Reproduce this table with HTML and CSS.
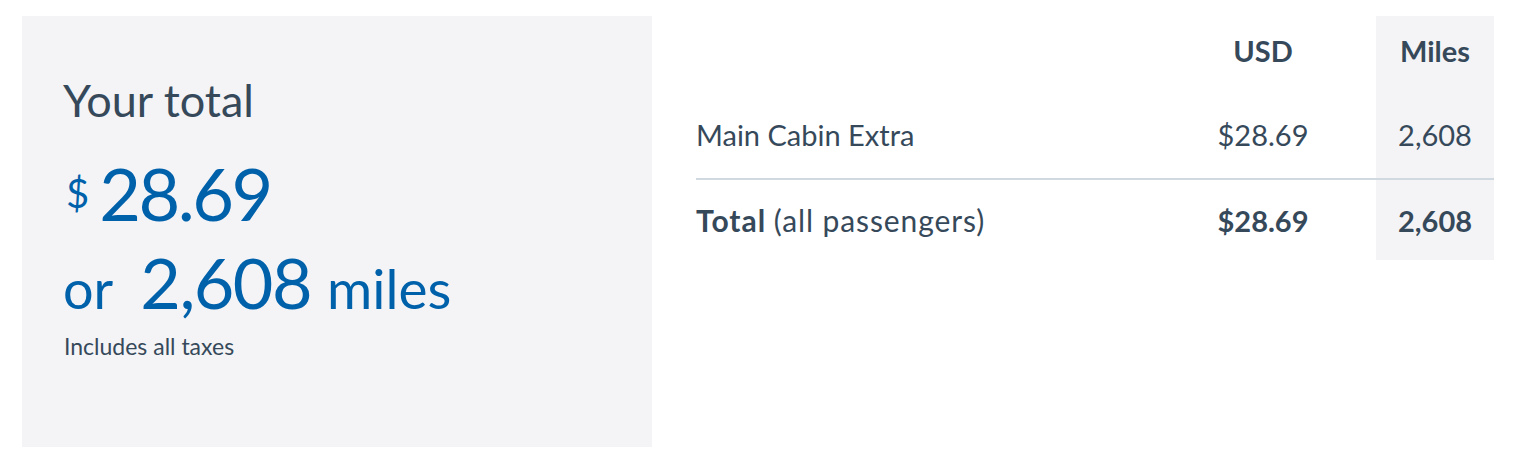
FILE: index.html
```html
<!DOCTYPE html>
<html lang="en">
<head>
<meta charset="utf-8">
<title>Your total</title>
<link rel="stylesheet" href="styles.css">
</head>
<body>
<div class="page">
  <section class="summary">
    <h2 class="summary-title">Your total</h2>
    <div class="price"><span class="currency">$</span><span class="amount">28.69</span></div>
    <div class="miles-line"><span class="or">or</span><span class="miles-amount">2,608</span><span class="miles-unit">miles</span></div>
    <p class="note">Includes all taxes</p>
  </section>
  <section class="breakdown">
    <div class="cell head"></div>
    <div class="cell head num">USD</div>
    <div class="cell head num miles-col">Miles</div>

    <div class="cell item divider">Main Cabin Extra</div>
    <div class="cell item num divider">$28.69</div>
    <div class="cell item num miles-col divider">2,608</div>

    <div class="cell total"><span class="total-label"><strong>Total</strong> <span class="total-sub">(all passengers)</span></span></div>
    <div class="cell total num"><strong>$28.69</strong></div>
    <div class="cell total num miles-col"><strong>2,608</strong></div>
  </section>
</div>
</body>
</html>
```
FILE: styles.css
```css
* { box-sizing: border-box; }
html, body { margin: 0; padding: 0; background: #ffffff; }
body {
  font-family: Lato, "Open Sans", "Liberation Sans", sans-serif;
  color: #36495a;
}
.page {
  display: flex;
  align-items: flex-start;
  gap: 44px;
  padding: 16px 24px 0 22px;
}
.summary {
  width: 630px;
  height: 431px;
  flex: none;
  background: #f4f4f6;
  padding: 57px 0 0 41px;
}
.summary-title {
  margin: 0;
  font-weight: 400;
  font-size: 45px;
  line-height: 54px;
  color: #36495a;
}
.price {
  margin-top: 26px;
  color: #0061ab;
  line-height: 80px;
  height: 80px;
}
.currency {
  font-size: 40px;
  vertical-align: 13px;
  margin-right: 10px;
  margin-left: 3px;
}
.amount { font-size: 72px; letter-spacing: -2.5px; }
.miles-line {
  margin-top: 9px;
  color: #0061ab;
  line-height: 80px;
  height: 80px;
}
.or { font-size: 54px; margin-right: 27px; }
.miles-amount { font-size: 70px; margin-right: 16px; letter-spacing: -1.5px; }
.miles-unit { font-size: 55px; }
.note {
  margin: 10px 0 0 1px;
  font-size: 23px;
  line-height: 28px;
}
.breakdown {
  flex: 1;
  display: grid;
  grid-template-columns: 1fr 226px 118px;
  grid-template-rows: 74px 90px 80px;
  font-size: 29px;
}
.cell {
  display: flex;
  align-items: center;
}
.num { justify-content: center; }
.head { font-weight: 700; padding-bottom: 6px; }
.miles-col { background: #f4f4f6; }
.divider { border-bottom: 2px solid #d0d9e0; }
.total strong { font-weight: 700; }
.total-label { font-size: 30px; }
.total-label strong { letter-spacing: 1px; }
.total-sub { letter-spacing: 0.9px; }
```
